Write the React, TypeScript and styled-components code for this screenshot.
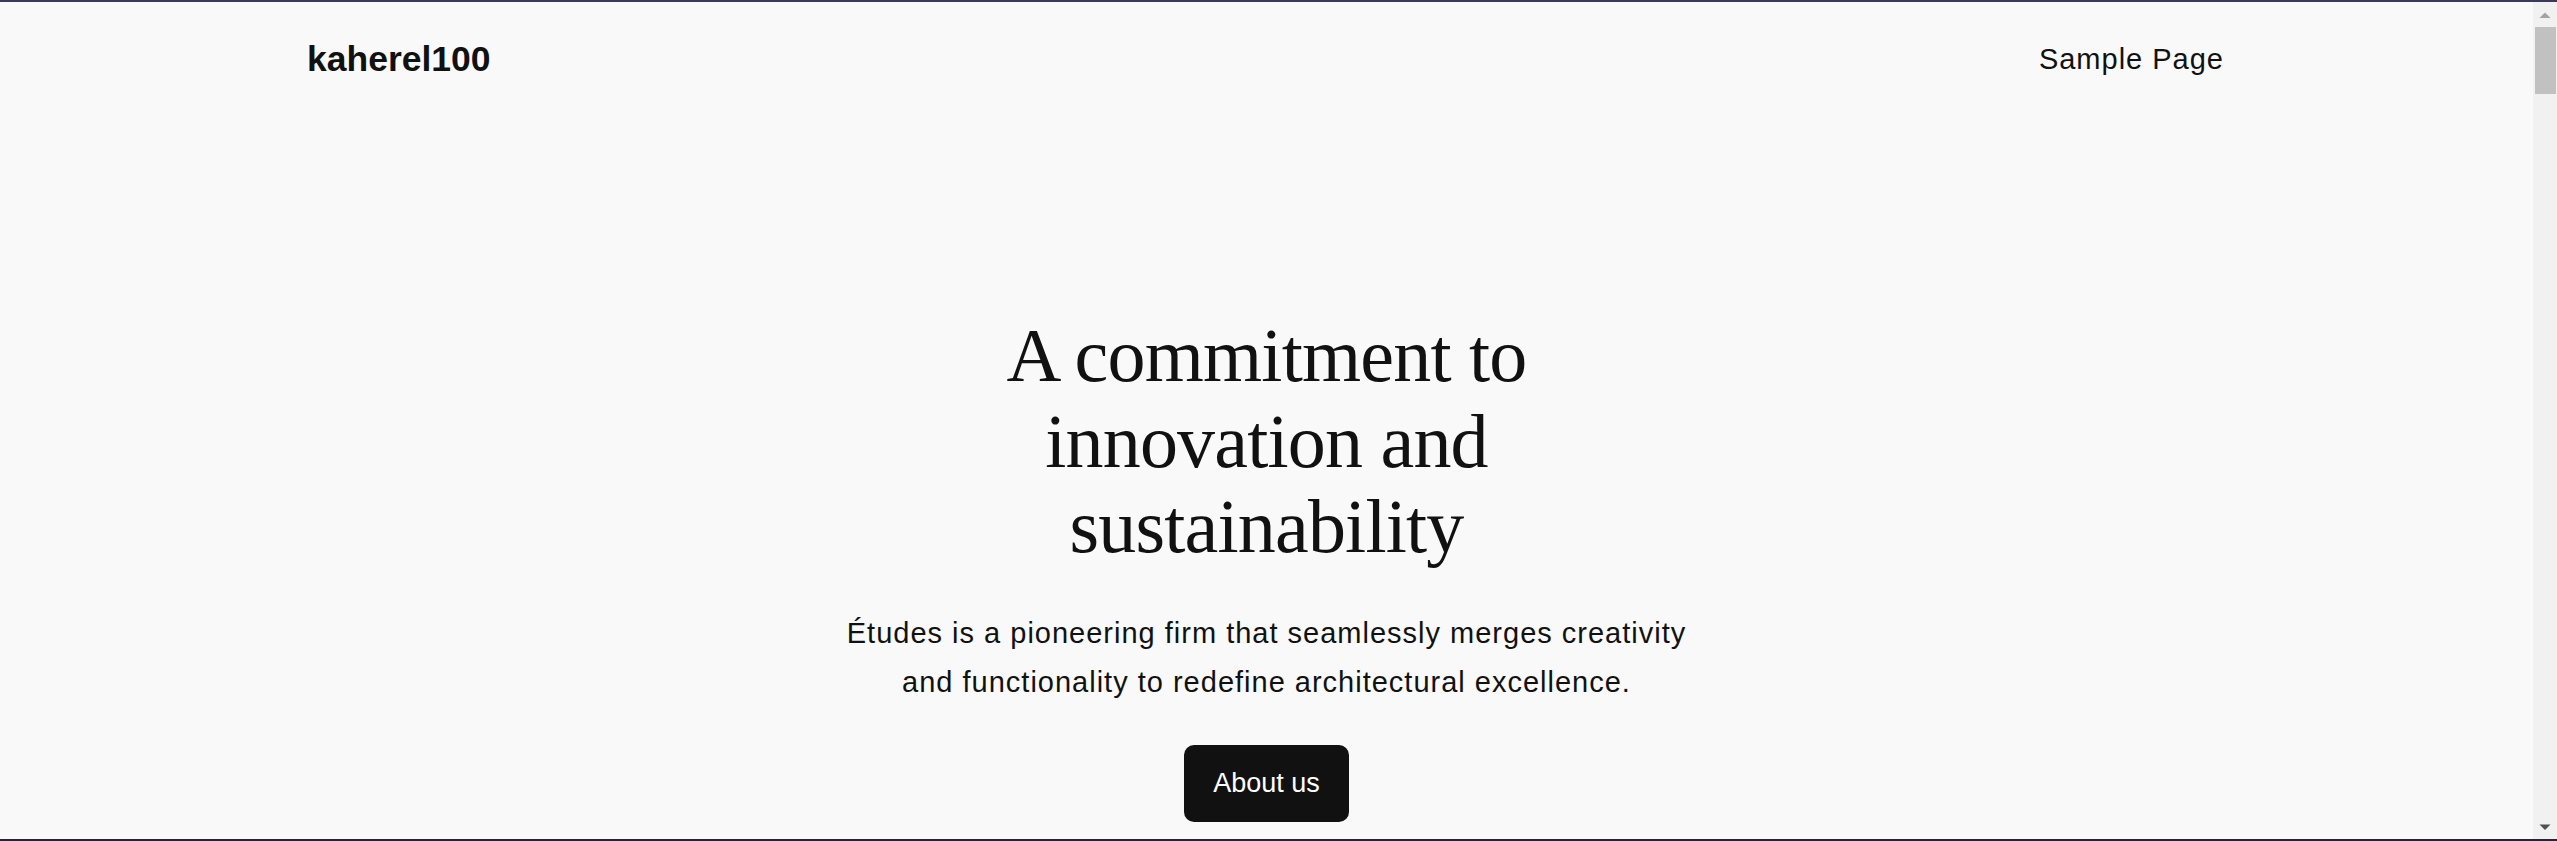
import React from 'react';
import styled, { createGlobalStyle } from 'styled-components';

const GlobalStyle = createGlobalStyle`
  html, body {
    margin: 0;
    padding: 0;
    height: 100%;
    overflow: hidden;
    background: #f9f9f9;
  }
  #root { height: 100%; }
  * { box-sizing: border-box; }
`;

const Frame = styled.div`
  height: 100vh;
  display: flex;
  flex-direction: row;
  border-top: 2px solid #3b3a5e;
  border-bottom: 2px solid #24243a;
  background: #f9f9f9;
`;

const Viewport = styled.div`
  flex: 1;
  min-width: 0;
  overflow: hidden;
`;

const ScrollRail = styled.div`
  width: 24px;
  flex: none;
  display: flex;
  flex-direction: column;
  background: #f1f1f1;
`;

const RailButton = styled.div`
  height: 25px;
  flex: none;
  display: flex;
  svg { display: block; }
`;

const RailTrack = styled.div`
  flex: 1;
  display: flex;
  flex-direction: column;
  padding: 0 1px 0 2px;
`;

const RailThumb = styled.div`
  height: 67px;
  background: #c1c1c1;
`;

const Page = styled.div`
  display: flex;
  flex-direction: column;
  color: #111111;
  font-family: "Liberation Sans", Arial, sans-serif;
`;

const Header = styled.header`
  display: flex;
  align-items: center;
  justify-content: space-between;
  padding: 36px 309px 0 307px;
`;

const Logo = styled.a`
  font-size: 35.5px;
  line-height: 43.2px;
  font-weight: 700;
  color: #111111;
  text-decoration: none;
`;

const Nav = styled.nav`
  display: flex;
  gap: 24px;
`;

const NavLink = styled.a`
  font-size: 29px;
  line-height: 34.8px;
  letter-spacing: 1px;
  color: #111111;
  text-decoration: none;
`;

const Hero = styled.section`
  display: flex;
  flex-direction: column;
  align-items: center;
  padding-top: 232px;
  text-align: center;
`;

const Title = styled.h1`
  margin: 0;
  max-width: 700px;
  font-family: "Liberation Serif", "Times New Roman", serif;
  font-weight: 400;
  font-size: 76px;
  line-height: 85.5px;
  letter-spacing: -0.8px;
  color: #111111;
`;

const Lead = styled.p`
  margin: 39px 0 0;
  max-width: 870px;
  font-size: 29px;
  line-height: 49px;
  letter-spacing: 1px;
  color: #111111;
`;

const Button = styled.a`
  margin-top: 38px;
  display: inline-flex;
  align-items: center;
  justify-content: center;
  width: 165px;
  height: 77px;
  border-radius: 10px;
  background: #111111;
  color: #ffffff;
  font-size: 27px;
  line-height: 1;
  text-decoration: none;
`;

const ArrowUp = () => (
  <svg width="24" height="25" viewBox="0 0 24 25">
    <polygon points="6.5,16 12,10.5 17.5,16" fill="#a3a3a3" />
  </svg>
);

const ArrowDown = () => (
  <svg width="24" height="25" viewBox="0 0 24 25">
    <polygon points="6.5,10.5 17.5,10.5 12,16" fill="#505050" />
  </svg>
);

export default function App() {
  return (
    <>
      <GlobalStyle />
      <Frame>
        <Viewport>
          <Page>
            <Header>
              <Logo href="#">kaherel100</Logo>
              <Nav>
                <NavLink href="#">Sample Page</NavLink>
              </Nav>
            </Header>
            <Hero>
              <Title>A commitment to innovation and sustainability</Title>
              <Lead>
                Études is a pioneering firm that seamlessly merges creativity and functionality to
                redefine architectural excellence.
              </Lead>
              <Button href="#">About us</Button>
            </Hero>
          </Page>
        </Viewport>
        <ScrollRail>
          <RailButton>
            <ArrowUp />
          </RailButton>
          <RailTrack>
            <RailThumb />
          </RailTrack>
          <RailButton>
            <ArrowDown />
          </RailButton>
        </ScrollRail>
      </Frame>
    </>
  );
}
